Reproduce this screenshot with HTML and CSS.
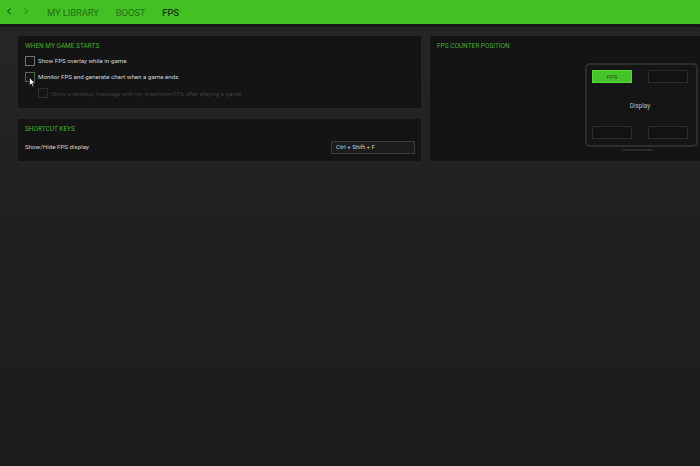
FILE: index.html
```html
<!DOCTYPE html>
<html>
<head>
<meta charset="utf-8">
<link rel="stylesheet" href="styles.css">
</head>
<body>
<header class="topbar">
  <span class="arrow back">&lsaquo;</span>
  <span class="arrow fwd">&rsaquo;</span>
  <nav class="tabs">
    <span class="tab">MY LIBRARY</span>
    <span class="tab">BOOST</span>
    <span class="tab active">FPS</span>
  </nav>
</header>
<main class="content">
  <div class="leftcol">
    <section class="panel game">
      <h2 class="ptitle">WHEN MY GAME STARTS</h2>
      <div class="row"><span class="cb"></span><span class="lbl">Show FPS overlay while in-game</span></div>
      <div class="row"><span class="cb hover"></span><span class="lbl">Monitor FPS and generate chart when a game ends</span>
        <svg class="cursor" width="7" height="11" viewBox="0 0 7 11"><path d="M0.5 0.5 L0.5 8.5 L2.3 6.8 L3.6 9.8 L4.8 9.3 L3.6 6.4 L6 6.4 Z" fill="#fff" stroke="#111" stroke-width="0.7"/></svg>
      </div>
      <div class="row sub"><span class="cb dim"></span><span class="lbl dim">Show a desktop message with my maximum FPS after playing a game</span></div>
    </section>
    <section class="panel keys">
      <h2 class="ptitle">SHORTCUT KEYS</h2>
      <div class="keyrow"><span class="lbl">Show/Hide FPS display</span><span class="keybox">Ctrl + Shift + F</span></div>
    </section>
  </div>
  <section class="panel position">
    <h2 class="ptitle">FPS COUNTER POSITION</h2>
    <div class="monitor-wrap">
      <div class="monitor">
        <div class="cell on">FPS</div>
        <div class="cell"></div>
        <div class="disp">Display</div>
        <div class="cell"></div>
        <div class="cell"></div>
      </div>
      <div class="stand"></div>
    </div>
  </section>
</main>
</body>
</html>
```

FILE: styles.css
```css
* { box-sizing: border-box; }
html, body { margin: 0; height: 100%; }
body {
  background: linear-gradient(#262626, #1f1f1f 60%, #1c1c1c);
  font-family: Roboto, "Open Sans", sans-serif;
  color: #d0d0d0;
  width: 700px;
  height: 466px;
  overflow: hidden;
}
.topbar {
  height: 27px;
  background: #42c222;
  border-bottom: 3px solid #171717;
  display: flex;
  align-items: center;
  padding-left: 6px;
}
.arrow {
  font-family: "DejaVu Sans", sans-serif;
  font-size: 15px;
  line-height: 1;
  color: #1d5a12;
  width: 17px;
  margin-top: -2px;
}
.arrow.fwd { color: #34931d; }
.tabs { display: flex; gap: 17px; margin-left: 7px; }
.tab {
  font-size: 9.5px;
  letter-spacing: -0.15px;
  color: #227015;
}
.tab.active { color: #15340c; font-weight: 500; }
.content {
  display: grid;
  grid-template-columns: 403px 1fr;
  column-gap: 9px;
  padding: 9px 0 0 18px;
}
.leftcol { display: flex; flex-direction: column; gap: 11px; }
.panel {
  background: #141414;
  border-radius: 1px;
  padding: 6px 7px;
}
.ptitle {
  margin: 0;
  font-size: 6.5px;
  font-weight: 400;
  color: #3fb02a;
  line-height: 8px;
}
.game { height: 72px; }
.row {
  position: relative;
  display: flex;
  align-items: center;
  gap: 3px;
  height: 10px;
  margin-top: 6px;
}
.game .ptitle { margin-bottom: 2px; }
.cb {
  width: 10px;
  height: 10px;
  border: 1px solid #727272;
  flex: none;
}
.cb.hover { border-color: #4d6b47; }
.cb.dim { border-color: #2e2e2e; }
.lbl { font-size: 6.2px; color: #d4d4d4; line-height: 9px; }
.lbl.dim { color: #3e3e3e; font-size: 6.1px; }
.row.sub { padding-left: 13px; margin-top: 6px; }
.cursor { position: absolute; left: 4px; top: 5px; }
.keys { height: 42px; }
.keyrow {
  display: flex;
  justify-content: space-between;
  align-items: center;
  margin-top: 8px;
}
.keybox {
  width: 84px;
  height: 13px;
  border: 1px solid #3a3a3a;
  background: #1c1c1c;
  font-size: 6.2px;
  color: #cfcfcf;
  line-height: 11px;
  padding-left: 4px;
  margin-right: -1px;
}
.position {
  height: 125px;
  display: flex;
  flex-direction: column;
}
.monitor-wrap {
  display: flex;
  flex-direction: column;
  align-items: flex-start;
  margin-left: 148px;
  margin-top: 13px;
}
.monitor {
  width: 113px;
  height: 84px;
  border: 2px solid #2d2d2d;
  border-radius: 5px;
  background: #151515;
  display: grid;
  grid-template-columns: 40px 40px;
  grid-template-rows: 13px 1fr 13px;
  justify-content: space-between;
  padding: 5px 8px 6px 5px;
}
.cell {
  border: 1px solid #2a2a2a;
  background: #121212;
}
.cell.on {
  background: #45c52a;
  border-color: #57d83a;
  color: #1c5512;
  font-size: 6px;
  text-align: center;
  line-height: 11px;
}
.disp {
  grid-column: 1 / 3;
  text-align: center;
  font-size: 6.3px;
  color: #bdbdbd;
  align-self: center;
  padding-top: 2px;
}
.stand {
  width: 30px;
  height: 2px;
  background: #2a2a2a;
  margin: 2px 0 0 38px;
}
```
